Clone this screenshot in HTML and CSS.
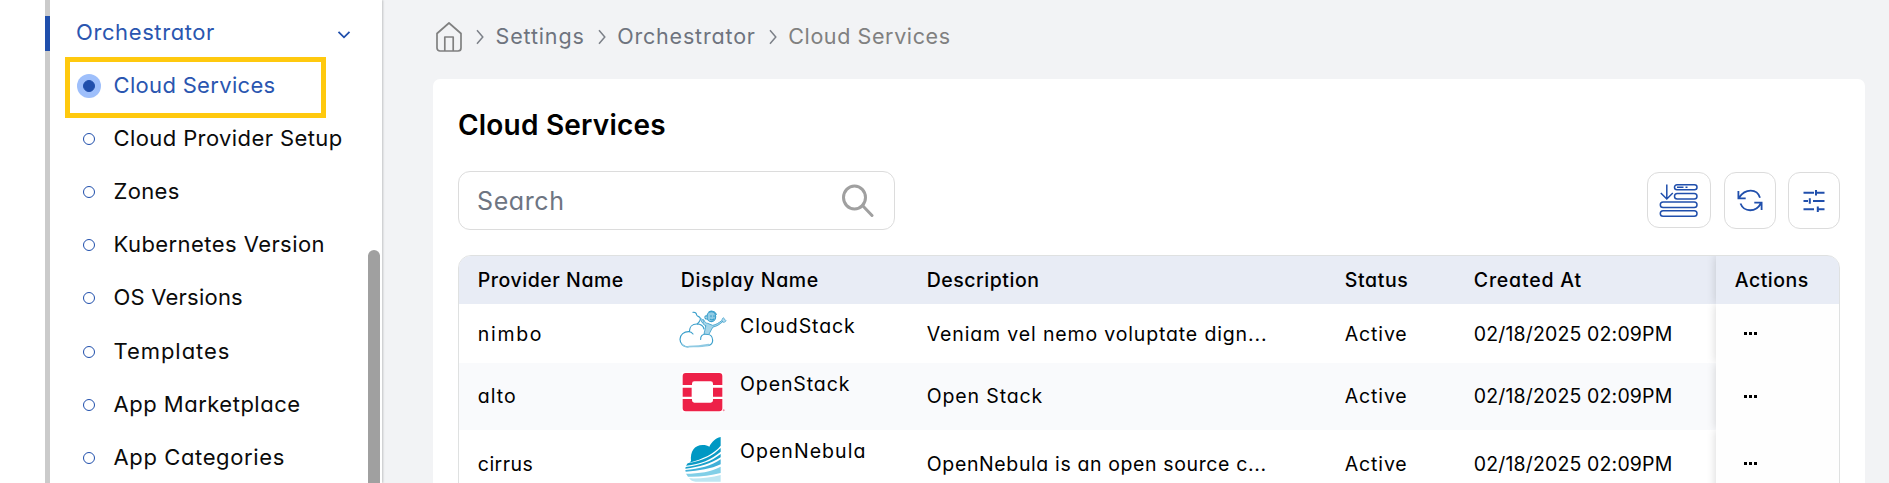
FILE: index.html
```html
<!DOCTYPE html>
<html lang="en">
<head>
<meta charset="utf-8">
<title>Cloud Services</title>
<link rel="stylesheet" href="styles.css">
</head>
<body>
<div class="app">
  <aside class="sidebar">
    <div class="rail"><div class="rail-active"></div></div>
    <nav class="nav">
      <div class="nav-head"><span class="t w-orch">Orchestrator</span>
        <svg class="nav-chevron" width="14" height="10" viewBox="0 0 14 10"><path d="M1.5 1.8 7 7.3l5.500-5.500" fill="none" stroke="#204fac" stroke-width="1.800"/></svg>
      </div>
      <ul class="nav-list">
        <li class="nav-item selected"><i class="dot"></i><span class="t w-cs">Cloud Services</span></li>
        <li class="nav-item"><i class="dot"></i><span class="t w-cps">Cloud Provider Setup</span></li>
        <li class="nav-item"><i class="dot"></i><span class="t w-zones">Zones</span></li>
        <li class="nav-item"><i class="dot"></i><span class="t w-kube">Kubernetes Version</span></li>
        <li class="nav-item"><i class="dot"></i><span class="t w-os">OS Versions</span></li>
        <li class="nav-item"><i class="dot"></i><span class="t w-tpl">Templates</span></li>
        <li class="nav-item"><i class="dot"></i><span class="t w-mkt">App Marketplace</span></li>
        <li class="nav-item"><i class="dot"></i><span class="t w-cat">App Categories</span></li>
      </ul>
    </nav>
    <div class="highlight"></div>
    <div class="scroll-thumb"></div>
  </aside>
  <main class="main">
    <div class="crumbs">
      <svg class="home" width="28" height="32" viewBox="0 0 28 32"><path d="M2 12.500 14 2l12 10.500V27a3 3 0 0 1-3 3H5a3 3 0 0 1-3-3ZM9.800 30V16h8.400v14" fill="none" stroke="#808080" stroke-width="1.700" stroke-linejoin="round"/></svg>
      <svg class="sep" width="8" height="16" viewBox="0 0 8 16"><path d="m1 1.200 5.800 6.800L1 14.800" fill="none" stroke="#7c8088" stroke-width="1.500"/></svg>
      <span class="crumb"><span class="t w-b1">Settings</span></span>
      <svg class="sep" width="8" height="16" viewBox="0 0 8 16"><path d="m1 1.200 5.800 6.800L1 14.800" fill="none" stroke="#7c8088" stroke-width="1.500"/></svg>
      <span class="crumb"><span class="t w-b2">Orchestrator</span></span>
      <svg class="sep" width="8" height="16" viewBox="0 0 8 16"><path d="m1 1.200 5.800 6.800L1 14.800" fill="none" stroke="#7c8088" stroke-width="1.500"/></svg>
      <span class="crumb current"><span class="t w-b3">Cloud Services</span></span>
    </div>
    <section class="card">
      <h1 class="title"><span class="t w-title">Cloud Services</span></h1>
      <div class="toolbar">
        <div class="search"><span class="t w-search">Search</span>
          <svg width="32" height="34" viewBox="0 0 32 34"><g fill="none" stroke="#a0a0a0" stroke-width="3"><ellipse cx="12.500" cy="13.500" rx="11" ry="11.500"/><path d="m20.500 21.500 9.500 10" stroke-linecap="round"/></g></svg>
        </div>
        <div class="buttons">
          <button class="btn wide" aria-label="Insert rows"><svg width="40" height="34" viewBox="0 0 40 34"><g fill="none" stroke="#204fac" stroke-width="1.500"><rect x="15.500" y="1.800" width="22.500" height="5" rx="2.500"/><path d="M18 4.300h6.500M26.500 4.300h2"/><rect x="15.500" y="10.500" width="22.500" height="5.500" rx="2.750"/><rect x="1.300" y="19" width="36.700" height="5.500" rx="2.750"/><rect x="1.300" y="27.700" width="36.700" height="5.500" rx="2.750"/><path d="M7.800 1.500V15.500M1.800 10l6 6 6-6"/></g></svg></button>
          <button class="btn" aria-label="Refresh"><svg width="26" height="23" viewBox="0 0 26 23"><g fill="none" stroke="#204fac" stroke-width="1.800"><path d="M1.400 2v7.300h7.300M24.600 21v-7.300h-7.300M2.200 8.500C8-.500 20-1 23 8.700M3.500 14.500C7 23.500 19 23.500 23.800 14.500"/></g></svg></button>
          <button class="btn" aria-label="Filter columns"><svg width="22" height="24" viewBox="0 0 22 24"><path d="M.500 3.700h10.500M13 .900v5.600M13 3.700h8.500M.500 12H5M6.800 9.200v5.600M10 12h11.500M.500 20.300h10.500M14.800 17.500v5.600M14.800 20.300h6.700" fill="none" stroke="#204fac" stroke-width="2"/></svg></button>
        </div>
      </div>
      <div class="table">
        <div class="row head">
          <div class="cell"><span class="t w-h1">Provider Name</span></div>
          <div class="cell"><span class="t w-h2">Display Name</span></div>
          <div class="cell"><span class="t w-h3">Description</span></div>
          <div class="cell"><span class="t w-h4">Status</span></div>
          <div class="cell"><span class="t w-h5">Created At</span></div>
          <div class="cell actions"><span class="t w-h6">Actions</span></div>
        </div>
        <div class="row r1">
          <div class="cell"><span class="t w-nimbo">nimbo</span></div>
          <div class="cell name">
            <svg class="logo" width="50" height="42" viewBox="715 205 150 126"><g fill="none" stroke="#3a9fcb" stroke-width="3.500" stroke-linecap="round" stroke-linejoin="round"><path d="M745 322c-14 0-24-10-24-23 0-14 12-24 28-23 0-14 9-23 22-23 11 0 20 6 22 15M748 276c5 0 9 3 12 7M783 299c-1-10 6-16 16-16 12 0 20 8 20 19 0 9-5 14-12 15" fill="#fff"/><path d="M726 313c5 6 11 9 19 9 20-1 42-1 61-4M747 320c20 0 40-2 60-6" stroke="#8fcae3"/><path d="M773 253c7-7 12-13 8-19-3-5-9-3-10-8-1-6 -5-9-11-8"/><path d="M798 259c-5-2-9-8-12-17l6-2c3 7 7 11 12 11l15 6c10-2 18-7 27-14l3 3c-10 9-18 14-29 16-6 9-8 15-13 23l-14-2c2-9 4-16 5-24Z" fill="#a5d5e9" stroke-width="2.500"/><ellipse cx="815" cy="231" rx="13" ry="15" fill="#92cce5"/><path d="M802 229c-7-4-9 9-1 9M808 217c6-4 15-3 18 2l4 5M814 228v3M823 228v3M812 239c4 3 8 2 11-1"/><path d="M784 242c-4-5 3-7 6 0s1 8-3 6ZM847 240c2-8 7-8 7 0 8 0 6 8-3 8Z" fill="#b9deef" stroke-width="2"/></g></svg>
            <span class="t w-n1">CloudStack</span></div>
          <div class="cell"><span class="t w-d1">Veniam vel nemo voluptate dign...</span></div>
          <div class="cell"><span class="t w-act">Active</span></div>
          <div class="cell"><span class="t w-date">02/18/2025 02:09PM</span></div>
          <div class="cell actions"><i class="more"></i></div>
        </div>
        <div class="row r2">
          <div class="cell"><span class="t w-alto">alto</span></div>
          <div class="cell name">
            <svg class="logo" width="50" height="46" viewBox="715 390 150 138"><path fill="#fff" d="M726 396h125v121H726z"/><path fill="#ed2148" d="M738 399h101q9 0 9 9v27h-28v-4q0-7-7-7h-49q-7 0-7 7v4h-28v-27q0-9 9-9ZM729 443h27v27h-27zM820 443h28v27h-28zM729 477h28v4q0 7 7 7h49q7 0 7-7v-4h28v28q0 9-9 9H738q-9 0-9-9Z"/><circle cx="852" cy="511" r="3" fill="#f28ca0"/></svg>
            <span class="t w-n2">OpenStack</span></div>
          <div class="cell"><span class="t w-d2">Open Stack</span></div>
          <div class="cell"><span class="t w-act">Active</span></div>
          <div class="cell"><span class="t w-date">02/18/2025 02:09PM</span></div>
          <div class="cell actions"><i class="more"></i></div>
        </div>
        <div class="row r3">
          <div class="cell"><span class="t w-cirrus">cirrus</span></div>
          <div class="cell name">
            <svg class="logo" width="50" height="48" viewBox="715 585 150 144"><path fill="#0098c3" d="M843 591v26c-20 24-53 40-94 51l5-5c-3-28 10-48 35-48 9 0 15 2 20 5 8-15 18-25 34-29Z"/><path fill="#0d9bc6" d="M843 624v11c-28 24-60 37-104 42l5-7c44-7 75-22 99-46Z"/><path fill="#1ba1cb" d="M843 642v10c-30 20-63 29-106 34l1-5c44-5 77-17 105-39Z"/><path fill="#41b0d8" d="M843 658v15c-28 13-66 20-105 22l-1-5c42-3 79-12 106-32Z"/><path fill="#81cfe7" d="M843 680v19c-30 8-64 12-98 11l-6-9c40 0 75-6 104-21Z"/><path fill="#bde6f2" d="M843 705v20h-75c-9 0-15-4-20-10 36 1 67-2 95-10Z"/></svg>
            <span class="t w-n3">OpenNebula</span></div>
          <div class="cell"><span class="t w-d3">OpenNebula is an open source c...</span></div>
          <div class="cell"><span class="t w-act">Active</span></div>
          <div class="cell"><span class="t w-date">02/18/2025 02:09PM</span></div>
          <div class="cell actions"><i class="more"></i></div>
        </div>
      </div>
    </section>
  </main>
</div>
</body>
</html>
```
FILE: styles.css
```css
* { box-sizing: border-box; }
body { margin: 0; font-family: Inter, "Open Sans", sans-serif; font-feature-settings: "cv11", "calt" 0; color: #0b0b0b; }
.app { display: flex; height: 483px; overflow: hidden; background: #f2f3f5; }
.t { white-space: nowrap; }

.sidebar { position: relative; display: flex; width: 382px; background: #fff; box-shadow: 1px 0 2px rgba(0, 0, 0, .2); }
.rail { width: 5px; margin-left: 45px; padding-top: 16px; background: #cbcbcb; }
.rail-active { height: 35px; background: #204fac; }
.nav { flex: 1; padding-top: 6px; font-size: 22px; }
.nav-head { display: flex; align-items: center; justify-content: space-between; height: 53px; padding: 0 31px 0 26px; color: #2a56b0; }
.nav-head .t { padding-bottom: 2px; }
.nav-chevron { margin-top: 4px; }
.nav-list { margin: 0; padding: 0; list-style: none; }
.nav-item { display: flex; align-items: center; gap: 18.500px; height: 53.100px; padding-left: 33px; }
.nav-item .t { padding-bottom: 1px; }
.nav-item.selected .t { padding-bottom: 2px; }
.dot { width: 12px; height: 12px; margin-top: 1px; border: 1px solid #204fac; border-radius: 50%; }
.nav-item.selected { color: #2a56b0; }
.selected .dot { background: #204fac; border-color: #204fac; box-shadow: 0 0 0 6px #9ebffb; }
.highlight { position: absolute; left: 65px; top: 57px; width: 261px; height: 61px; border: 5px solid #ffc90e; }
.scroll-thumb { position: absolute; left: 368px; top: 250px; width: 12px; height: 300px; border-radius: 6px; background: #a0a0a0; }

.main { flex: 1; padding: 0 24px 0 51px; }
.crumbs { display: flex; align-items: center; height: 79px; padding: 0 0 6px 2px; font-size: 21.500px; color: #6e737e; }
.crumb { padding-bottom: 2px; }
.sep { margin: 0 11.500px 0 13px; }
.current { color: #808080; }
.card { height: 420px; padding: 25px 25px 0; border-radius: 7px; background: #fff; }
.title { margin: 0; height: 42px; line-height: 43px; font-size: 28px; font-weight: 600; color: #000; }
.toolbar { display: flex; justify-content: space-between; margin-top: 25px; height: 84px; }
.search { display: flex; align-items: center; justify-content: space-between; width: 437px; height: 59px; padding: 0 20px 0 18px; border: 1px solid #dcdcdc; border-radius: 12px; font-size: 25px; color: #6e7582; }
.buttons { display: flex; gap: 12px; padding-top: 1px; }
.btn { display: flex; align-items: center; justify-content: center; width: 52px; height: 57px; padding: 0; border: 1px solid #dcdcdc; border-radius: 12px; background: #fff; }
.wide { width: 64px; height: 56px; margin-right: 1px; }

.table { border: 1px solid #dfe1e1; border-radius: 13px; overflow: hidden; height: 300px; font-size: 19.500px; color: #000; }
.row { display: grid; grid-template-columns: 203px 246px 418px 129px 261px 1fr; }
.cell { display: flex; align-items: center; padding-left: 18.800px; }
.head { height: 48px; background: #e8ecf5; font-weight: 500; }
.r1 { height: 59px; }
.r2 { height: 67px; background: #f9fafc; }
.r3 { height: 67px; }
.actions { background: #fefefe; box-shadow: 0 0 9px rgba(0, 0, 0, .17); clip-path: inset(0 0 0 -12px); }
.head .actions { background: #e8ecf5; }
.name { align-items: flex-start; padding-left: 16px; gap: 12px; }
.name .t { padding-top: 10px; }
.r2 .t { margin-top: -1px; }
.r3 .name .t { margin-top: -1px; }
.r1 .logo { margin-top: 4px; }
.r2 .logo { margin-top: 7px; }
.r3 .logo { margin-top: 5px; }
.more { width: 15px; height: 3px; margin-left: 8px; background: radial-gradient(circle, #000 1.600px, transparent 2px) 0 0 / 5px 3px; }

/* tracking per label */
.w-orch { letter-spacing: .600px; }
.w-cs { letter-spacing: .320px; }
.w-cps { letter-spacing: .400px; }
.w-zones { letter-spacing: .350px; }
.w-kube { letter-spacing: .430px; }
.w-os { letter-spacing: .220px; }
.w-tpl { letter-spacing: .950px; }
.w-mkt { letter-spacing: .500px; }
.w-cat { letter-spacing: .620px; }
.w-b1 { letter-spacing: .850px; }
.w-b2 { letter-spacing: .820px; }
.w-b3 { letter-spacing: .600px; }
.w-title { letter-spacing: .200px; }
.w-search { letter-spacing: .600px; }
.w-h1 { letter-spacing: .540px; }
.w-h2 { letter-spacing: .630px; }
.w-h3 { letter-spacing: .500px; }
.w-h4 { letter-spacing: .600px; }
.w-h5 { letter-spacing: .800px; }
.w-h6 { letter-spacing: .500px; }
.w-nimbo { letter-spacing: 1.700px; }
.w-alto { letter-spacing: 1.050px; }
.w-cirrus { letter-spacing: .450px; }
.w-n1, .w-n2 { letter-spacing: .900px; }
.w-n3 { letter-spacing: 1.050px; }
.w-d1 { letter-spacing: .850px; }
.w-d2 { letter-spacing: .850px; }
.w-d3 { letter-spacing: .620px; }
.w-act { letter-spacing: .850px; }
.w-date { letter-spacing: .150px; }
```
